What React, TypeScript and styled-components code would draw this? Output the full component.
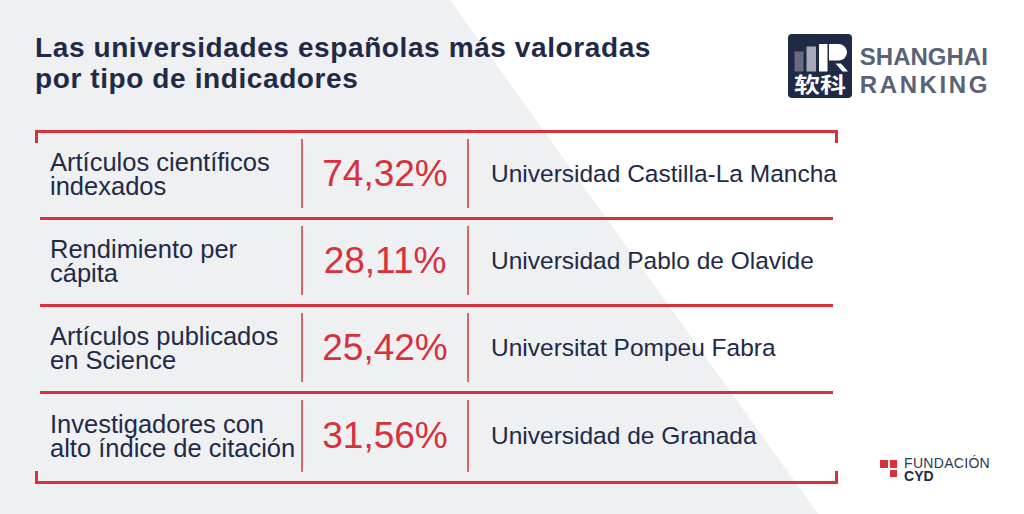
import styled, { createGlobalStyle } from "styled-components";

const NAVY = "#1f2a47";
const RED = "#d8313c";

const GlobalStyle = createGlobalStyle`
  html, body {
    margin: 0;
    padding: 0;
  }
  body {
    font-family: "Liberation Sans", Arial, sans-serif;
  }
`;

type Row = {
  label: [string, string];
  value: string;
  university: string;
};

const rows: Row[] = [
  { label: ["Artículos científicos", "indexados"], value: "74,32%", university: "Universidad Castilla-La Mancha" },
  { label: ["Rendimiento per", "cápita"], value: "28,11%", university: "Universidad Pablo de Olavide" },
  { label: ["Artículos publicados", "en Science"], value: "25,42%", university: "Universitat Pompeu Fabra" },
  { label: ["Investigadores con", "alto índice de citación"], value: "31,56%", university: "Universidad de Granada" },
];

const Page = styled.div`
  width: 1024px;
  height: 514px;
  box-sizing: border-box;
  padding: 32px 34px 0 35px;
  background: linear-gradient(54.4deg, #eef0f2 58.77%, #ffffff 58.77%);
  display: flex;
  flex-direction: column;
  overflow: hidden;
`;

const Header = styled.header`
  display: flex;
  justify-content: space-between;
  align-items: flex-start;
  height: 66px;
`;

const Title = styled.h1`
  margin: 0;
  font-size: 28px;
  line-height: 31px;
  font-weight: 700;
  letter-spacing: 0.6px;
  color: ${NAVY};
`;

const Shanghai = styled.div`
  display: flex;
  align-items: flex-start;
  gap: 8px;
  margin-top: 2px;
`;

const ShanghaiWords = styled.div`
  display: flex;
  flex-direction: column;
  padding-top: 9px;
  font-size: 24px;
  line-height: 28px;
  font-weight: 700;
  color: #5a6277;
`;

const Word = styled.span<{ $spacing?: number }>`
  letter-spacing: ${(p) => p.$spacing ?? 0}px;
`;

const Body = styled.div`
  display: flex;
  margin-top: 32px;
`;

const Table = styled.div`
  width: 803px;
  display: flex;
  flex-direction: column;
`;

const Bracket = styled.div<{ $side: "top" | "bottom" }>`
  height: 13px;
  box-sizing: border-box;
  border: 3px solid ${RED};
  ${(p) =>
    p.$side === "top"
      ? "border-bottom: none; margin-bottom: -10px;"
      : "border-top: none; margin-top: -10px;"}
`;

const TableRow = styled.div<{ $last?: boolean }>`
  margin: 0 5px;
  height: 87px;
  box-sizing: border-box;
  display: grid;
  grid-template-columns: 261px 166px 1fr;
  border-bottom: ${(p) => (p.$last ? "none" : `3px solid ${RED}`)};
`;

const Cell = styled.div`
  margin: 6px 0 9px;
  display: flex;
  align-items: center;
`;

const Label = styled(Cell)`
  padding-left: 10px;
  font-size: 25.5px;
  line-height: 24px;
  color: ${NAVY};
`;

const Value = styled(Cell)`
  justify-content: center;
  border-left: 2px solid #e0636b;
  font-size: 37px;
  color: ${RED};
`;

const University = styled(Cell)`
  padding-left: 22px;
  border-left: 2px solid #e0636b;
  font-size: 24.5px;
  color: ${NAVY};
  white-space: nowrap;
`;

const Side = styled.div`
  margin-left: auto;
  display: flex;
  align-items: flex-end;
  padding-bottom: 2px;
`;

const Fundacion = styled.div`
  display: flex;
  align-items: flex-start;
  gap: 7px;
`;

const Squares = styled.div`
  margin-top: 3px;
  display: grid;
  grid-template-columns: 7.5px 7.5px;
  grid-auto-rows: 7.5px;
  gap: 2px;
`;

const Square = styled.span<{ $on?: boolean }>`
  background: ${(p) => (p.$on ? RED : "transparent")};
`;

const FundacionText = styled.div`
  display: flex;
  flex-direction: column;
  font-size: 14px;
  line-height: 12.5px;
  color: #2d3652;
`;

const FundacionName = styled.span`
  letter-spacing: 0.3px;
`;

const Cyd = styled.span`
  font-weight: 700;
  color: ${NAVY};
`;

const ShanghaiMark = () => (
  <svg width="64" height="64" viewBox="0 0 64 64">
    <rect width="64" height="64" rx="4" fill={NAVY} />
    <rect x="6.5" y="17.5" width="9" height="20" fill="#6b6a85" />
    <rect x="18.5" y="12.5" width="9.5" height="25" fill="#a9a8bb" />
    <rect x="31" y="10" width="8.5" height="27.5" fill="#ffffff" />
    <path d="M41 10 H50.5 A8.5 8.3 0 0 1 50.5 26.6 H41 Z" fill="#ffffff" />
    <polygon points="47.5,29.5 53,29.5 60,37.5 54.5,37.5" fill="#ffffff" />
    <text
      x="6"
      y="57.5"
      fontSize="21"
      fontWeight="700"
      fill="#ffffff"
      textLength="52"
      lengthAdjust="spacingAndGlyphs"
      fontFamily='"Noto Sans CJK SC", sans-serif'
    >
      软科
    </text>
  </svg>
);

export default function App() {
  return (
    <>
      <GlobalStyle />
      <Page>
        <Header>
          <Title>
            Las universidades españolas más valoradas
            <br />
            por tipo de indicadores
          </Title>
          <Shanghai>
            <ShanghaiMark />
            <ShanghaiWords>
              <Word>SHANGHAI</Word>
              <Word $spacing={2.6}>RANKING</Word>
            </ShanghaiWords>
          </Shanghai>
        </Header>
        <Body>
          <Table>
            <Bracket $side="top" />
            {rows.map((row, i) => (
              <TableRow key={row.value} $last={i === rows.length - 1}>
                <Label>
                  <span>
                    {row.label[0]}
                    <br />
                    {row.label[1]}
                  </span>
                </Label>
                <Value>{row.value}</Value>
                <University>{row.university}</University>
              </TableRow>
            ))}
            <Bracket $side="bottom" />
          </Table>
          <Side>
            <Fundacion>
              <Squares>
                <Square $on />
                <Square $on />
                <Square />
                <Square $on />
              </Squares>
              <FundacionText>
                <FundacionName>FUNDACIÓN</FundacionName>
                <Cyd>CYD</Cyd>
              </FundacionText>
            </Fundacion>
          </Side>
        </Body>
      </Page>
    </>
  );
}
